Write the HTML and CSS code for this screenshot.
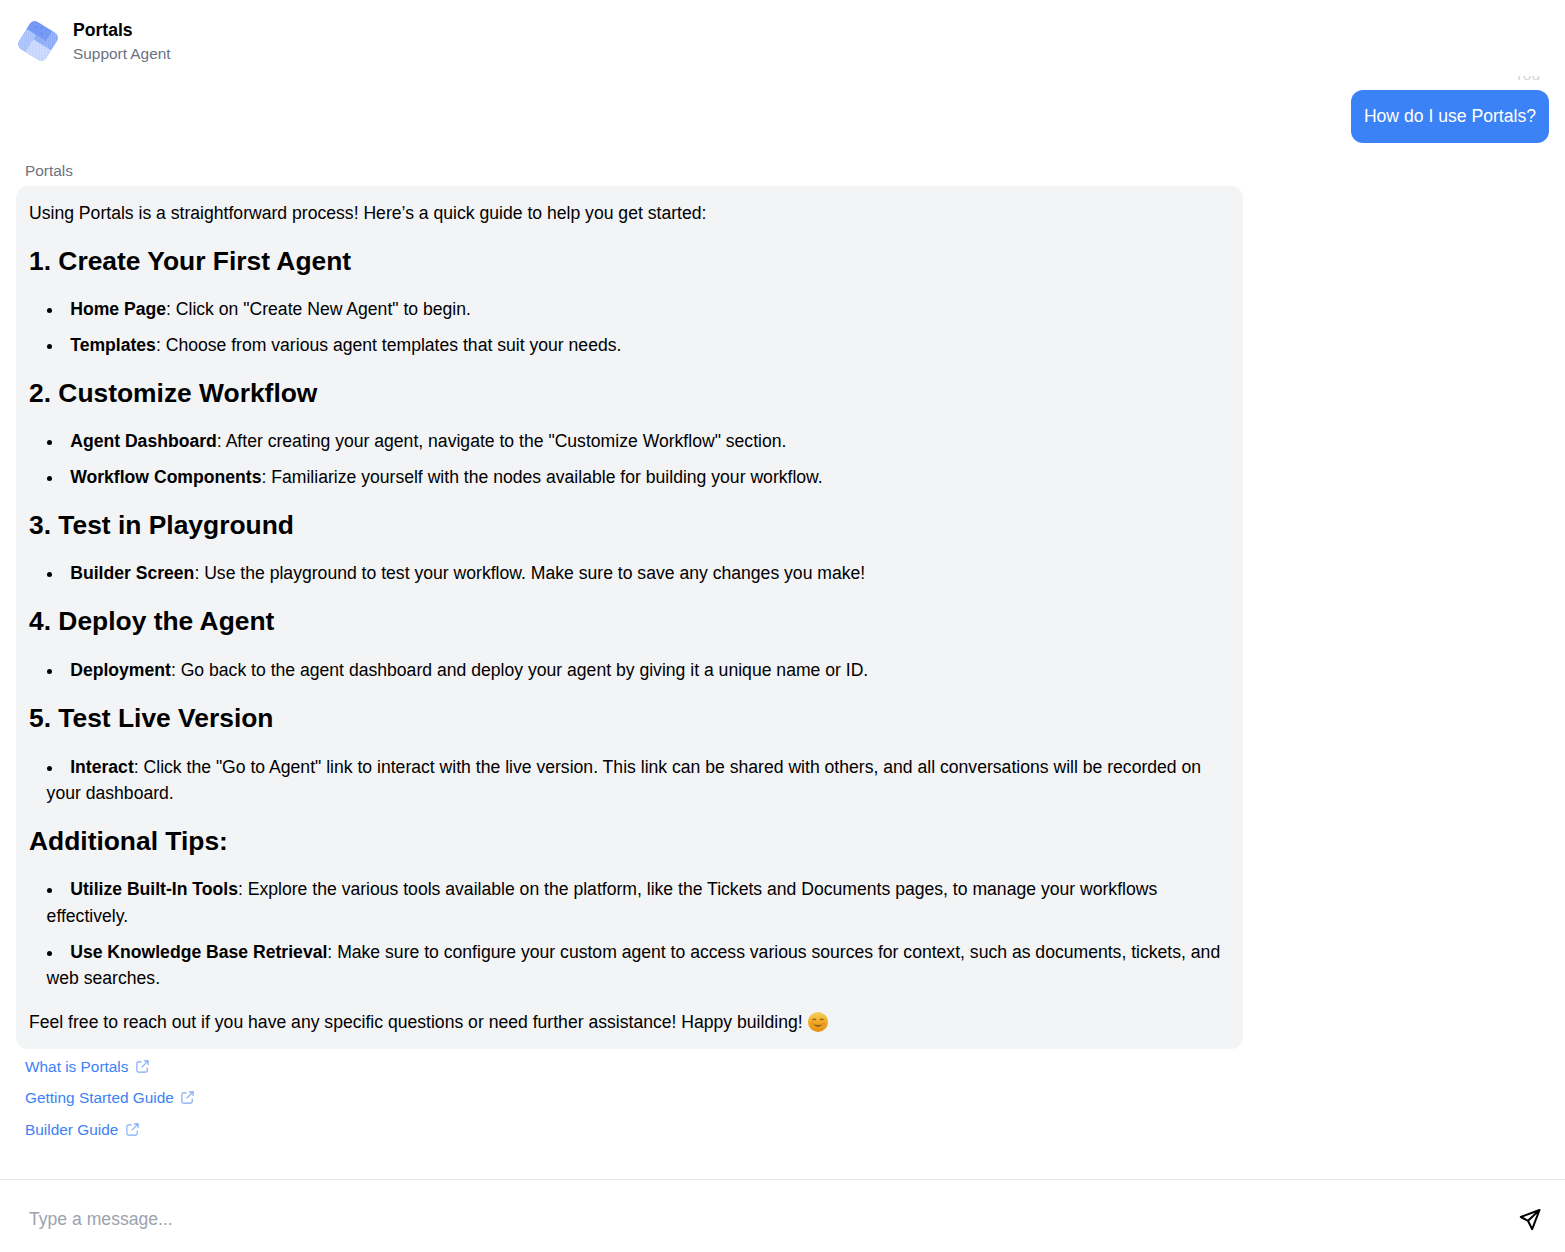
FILE: index.html
```html
<!DOCTYPE html>
<html lang="en">
<head>
<meta charset="utf-8">
<title>Portals Support Agent</title>
<link rel="stylesheet" href="styles.css">
</head>
<body>
<div class="app">
  <header class="header">
    <svg class="logo" viewBox="0 0 44 44" aria-hidden="true">
      <defs>
        <pattern id="dots" width="2" height="2" patternUnits="userSpaceOnUse" patternTransform="rotate(-32)"><rect width="1" height="1" fill="#fff" fill-opacity=".25"/></pattern>
        <pattern id="sparse" width="3" height="3" patternUnits="userSpaceOnUse" patternTransform="rotate(-32)"><rect width="1" height="1" fill="#fff" fill-opacity=".5"/></pattern>
        <clipPath id="tile"><rect x="6" y="6" width="32" height="32" rx="6"/></clipPath>
      </defs>
      <g transform="rotate(32 22 22)">
        <g clip-path="url(#tile)">
          <rect x="5" y="5" width="34" height="34" fill="#9db8f8"/>
          <rect x="5" y="5" width="24" height="13" fill="#7599f5"/>
          <rect x="29" y="5" width="10" height="18" fill="#8dabf6"/>
          <rect x="17" y="18" width="12" height="5" fill="#90aef7"/>
          <rect x="5" y="18" width="12" height="21" fill="#a8c1f9"/>
          <rect x="17" y="23" width="22" height="16" fill="#c6d6fc"/>
          <rect x="29" y="5" width="10" height="18" fill="url(#dots)"/>
          <rect x="5" y="18" width="12" height="21" fill="url(#dots)"/>
          <rect x="17" y="23" width="22" height="16" fill="url(#sparse)"/>
          <circle cx="13" cy="11" r=".6" fill="#3f6fe0"/>
          <circle cx="18" cy="9" r=".6" fill="#3f6fe0"/>
          <circle cx="21" cy="14" r=".6" fill="#3f6fe0"/>
        </g>
      </g>
    </svg>
    <div class="brand">
      <div class="brand-name">Portals</div>
      <div class="brand-sub">Support Agent</div>
    </div>
  </header>
  <main class="messages">
    <div class="user-row">
      <div class="you">You</div>
      <div class="user-bubble">How do I use Portals?</div>
    </div>
    <div class="bot-label">Portals</div>
    <article class="bot-bubble">
      <p>Using Portals is a straightforward process! Here’s a quick guide to help you get started:</p>
      <h3>1. Create Your First Agent</h3>
      <ul>
        <li><strong>Home Page</strong>: Click on "Create New Agent" to begin.</li>
        <li><strong>Templates</strong>: Choose from various agent templates that suit your needs.</li>
      </ul>
      <h3>2. Customize Workflow</h3>
      <ul>
        <li><strong>Agent Dashboard</strong>: After creating your agent, navigate to the "Customize Workflow" section.</li>
        <li><strong>Workflow Components</strong>: Familiarize yourself with the nodes available for building your workflow.</li>
      </ul>
      <h3>3. Test in Playground</h3>
      <ul>
        <li><strong>Builder Screen</strong>: Use the playground to test your workflow. Make sure to save any changes you make!</li>
      </ul>
      <h3>4. Deploy the Agent</h3>
      <ul>
        <li><strong>Deployment</strong>: Go back to the agent dashboard and deploy your agent by giving it a unique name or ID.</li>
      </ul>
      <h3>5. Test Live Version</h3>
      <ul>
        <li><strong>Interact</strong>: Click the "Go to Agent" link to interact with the live version. This link can be shared with others, and all conversations will be recorded on your dashboard.</li>
      </ul>
      <h3>Additional Tips:</h3>
      <ul>
        <li><strong>Utilize Built-In Tools</strong>: Explore the various tools available on the platform, like the Tickets and Documents pages, to manage your workflows effectively.</li>
        <li><strong>Use Knowledge Base Retrieval</strong>: Make sure to configure your custom agent to access various sources for context, such as documents, tickets, and web searches.</li>
      </ul>
      <p>Feel free to reach out if you have any specific questions or need further assistance! Happy building! <svg class="emoji" viewBox="0 0 20 20" aria-hidden="true"><defs><linearGradient id="face" x1="0" y1="0" x2="0" y2="1"><stop offset="0" stop-color="#f7d060"/><stop offset=".5" stop-color="#f2aa22"/><stop offset="1" stop-color="#e58f12"/></linearGradient></defs><circle cx="10" cy="10" r="10" fill="url(#face)"/><path d="M4.500 8q1.800-1.600 3.500 0M12 8q1.800-1.600 3.500 0" fill="none" stroke="#7d5c28" stroke-width="1.100"/><path d="M6.500 13q3.500 2.800 7 0q-3.500 1-7 0Z" fill="#6f4f20" stroke="#6f4f20" stroke-width=".6"/><circle cx="4.500" cy="11.500" r="1.700" fill="#ee8f34" fill-opacity=".7"/><circle cx="15.500" cy="11.500" r="1.700" fill="#ee8f34" fill-opacity=".7"/></svg></p>
    </article>
    <nav class="sources">
      <a class="source" href="#">What is Portals <svg class="ext" viewBox="0 0 16 16" aria-hidden="true"><path d="M7 3H3.500A1.500 1.500 0 0 0 2 4.500v8A1.500 1.500 0 0 0 3.500 14h8a1.500 1.500 0 0 0 1.500-1.500V9M9.500 2H14v4.500M14 2 7 9"/></svg></a>
      <a class="source" href="#">Getting Started Guide <svg class="ext" viewBox="0 0 16 16" aria-hidden="true"><path d="M7 3H3.500A1.500 1.500 0 0 0 2 4.500v8A1.500 1.500 0 0 0 3.500 14h8a1.500 1.500 0 0 0 1.500-1.500V9M9.500 2H14v4.500M14 2 7 9"/></svg></a>
      <a class="source" href="#">Builder Guide <svg class="ext" viewBox="0 0 16 16" aria-hidden="true"><path d="M7 3H3.500A1.500 1.500 0 0 0 2 4.500v8A1.500 1.500 0 0 0 3.500 14h8a1.500 1.500 0 0 0 1.500-1.500V9M9.500 2H14v4.500M14 2 7 9"/></svg></a>
    </nav>
  </main>
  <footer class="composer">
    <span class="placeholder">Type a message...</span>
    <svg class="send" viewBox="0 0 24 24" aria-hidden="true"><path d="M21.500 3 2.800 10l7.200 3.800 4.200 8.400zM21.500 3 10 13.800"/></svg>
  </footer>
</div>
</body>
</html>
```

FILE: styles.css
```css
* { box-sizing: border-box; }
html, body { margin: 0; height: 100%; }
body {
  background: #fff;
  color: #000;
  font-family: "Liberation Sans", Arial, sans-serif;
  font-size: 17.6px;
  line-height: 26.4px;
}
.app { height: 1252px; display: flex; flex-direction: column; overflow: hidden; }
.header { height: 76px; flex: none; display: flex; align-items: flex-start; padding: 18px 0 0 16px; gap: 13px; }
.logo { width: 44px; height: 44px; flex: none; margin-top: 1px; }
.brand-name { font-size: 17.6px; font-weight: 700; line-height: 24px; }
.brand-sub { font-size: 15.4px; color: #6b7280; line-height: 24px; }
.messages { flex: 1; min-height: 0; overflow: hidden; padding: 0 16px; }
.user-row { display: flex; flex-direction: column; align-items: flex-end; margin-top: -11px; }
.you { font-size: 15.4px; line-height: 20px; color: #9ca3af; opacity: .45; padding-right: 9px; height: 25px; }
.user-bubble { background: #3b82f6; color: #fff; border-radius: 12px; padding: 13px; line-height: 27px; }
.bot-label { font-size: 15.4px; line-height: 20px; color: #6b7280; margin: 18px 0 5px 9px; }
.bot-bubble { width: 1227px; background: #f3f4f6; border-radius: 12px; padding: 14px 13px 13.3px; }
.bot-bubble p { margin: 0; }
.bot-bubble p:last-child { margin-top: 17.5px; }
.bot-bubble h3 { font-size: 26.4px; line-height: 32px; font-weight: 700; margin: 18.7px 0 19.2px; }
.bot-bubble h3:nth-of-type(4) { margin: 18.5px 0 19.4px; }
.bot-bubble h3:nth-of-type(5) { margin-bottom: 19.9px; }
.bot-bubble ul { margin: 0; padding: 0 0 0 17.6px; list-style-position: inside; }
.bot-bubble li { margin-bottom: 9.4px; }
.emoji { width: 20px; height: 20px; vertical-align: -4px; margin-left: 1px; }
.sources { padding: 6.3px 0 0 9px; }
.source { display: block; color: #3b82f6; text-decoration: none; font-size: 15.4px; line-height: 24px; margin-bottom: 7.5px; }
.ext { width: 15px; height: 15px; vertical-align: -2px; margin-left: 2px; fill: none; stroke: #7ea8f8; stroke-width: 1.2; }
.composer { height: 73px; flex: none; border-top: 1px solid #e5e7eb; display: flex; align-items: center; justify-content: space-between; padding: 5px 23px 0 29px; }
.placeholder { color: #9ca3af; margin-top: 2px; }
.send { width: 24px; height: 24px; fill: none; stroke: #000; stroke-width: 2; stroke-linejoin: round; stroke-linecap: round; }
```
